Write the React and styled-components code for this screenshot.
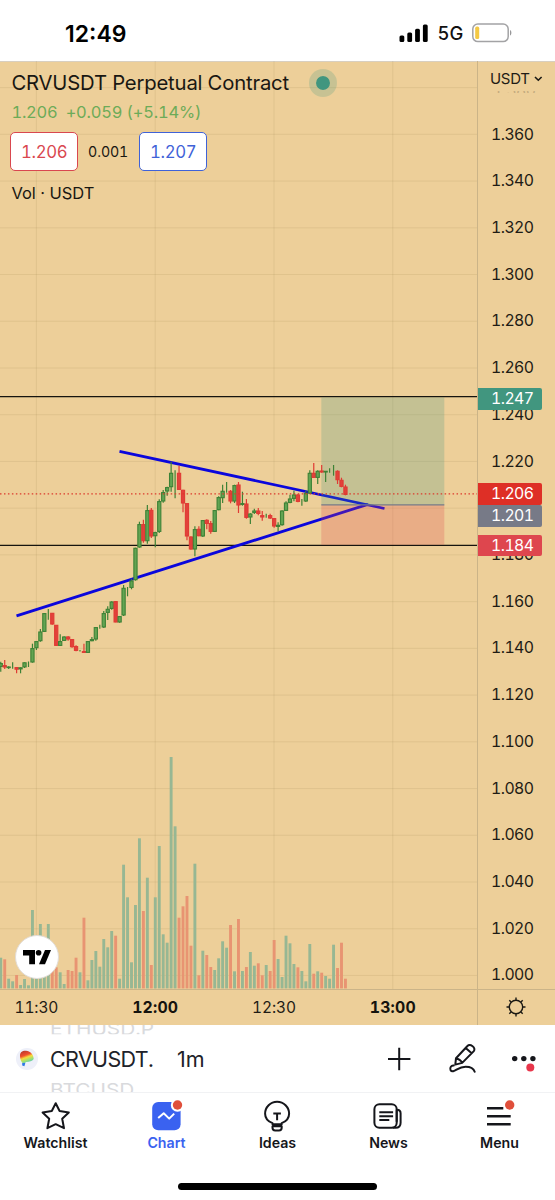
import styled, {createGlobalStyle, css} from 'styled-components';

const SAND = '#edcf99';

// * [volTop, high, bodyTop, bodyBottom, low, up]
const bars = [
  [957.7, 661.7, 663.3, 666.7, 671.7, 1], [959.3, 660, 665.3, 667.3, 669, 0],
  [978.7, 666.3, 666.7, 667.7, 669, 1], [981.3, 662.3, 667, 667.6, 668.7, 1],
  [975, 667.3, 667.3, 669.5, 673.3, 0], [985, 667.3, 667.5, 669.2, 673.3, 1],
  [979, 662.3, 662.5, 667.2, 668, 1], [985.3, 661.5, 662, 662.5, 667, 1],
  [910, 643.7, 648.3, 662.3, 662.7, 1], [956, 641, 641.3, 648, 650, 1],
  [924, 629, 631.7, 641, 641.7, 1], [950, 613, 613.3, 631.7, 632, 1],
  [924, 609, 613, 613.5, 619.7, 1], [970, 613, 613, 624.3, 624.7, 0],
  [967.3, 625, 625, 645.7, 645.7, 0], [972.3, 634.3, 641.3, 645.7, 646, 1],
  [984, 636.3, 636.7, 640.7, 641, 1], [970, 636, 636.7, 639.3, 640.7, 0],
  [971, 639, 639.3, 647, 647.7, 0], [957.7, 645.3, 646.3, 650.7, 651.3, 0],
  [972.3, 650, 650.7, 651.2, 651.5, 1], [917.7, 643.7, 651.3, 652.7, 652.7, 0],
  [980.3, 641, 641.3, 652.7, 653, 1], [960, 637, 639.3, 641, 641.3, 1],
  [951, 627, 627.3, 639.3, 640.7, 1], [966.7, 624.7, 627.3, 628, 628.7, 1],
  [939, 611, 613.3, 627.3, 628, 1], [947.3, 606.3, 609, 612.7, 620, 1],
  [931, 601.3, 601.7, 608.7, 609.7, 1], [935.7, 601.3, 601.3, 622.3, 622.3, 0],
  [978.7, 616, 616.3, 622.3, 622.7, 1], [864.7, 585, 588, 615.3, 616, 1],
  [897.3, 587, 587, 587.5, 596.3, 1], [962.3, 578.7, 580.7, 587.7, 589.3, 1],
  [905, 547.7, 548, 580, 580.7, 1], [838.3, 521.7, 524.3, 547.3, 547.7, 1],
  [911, 519.7, 524.3, 541, 542.7, 0], [877.7, 505, 510.3, 541, 543.7, 1],
  [965, 508, 510, 536.3, 538, 0], [897.3, 531.7, 532.3, 536, 547.3, 1],
  [846, 499.3, 501.3, 531.7, 533, 1], [934.3, 490, 492.3, 501.3, 502.7, 1],
  [942.7, 486.7, 487.3, 491.3, 495.7, 1], [757, 461.7, 473, 487, 491.7, 1],
  [826.3, 470.3, 472.7, 473.2, 498.3, 1], [917.7, 465.7, 473, 489.7, 489.7, 0],
  [906.3, 489.7, 490, 503.3, 512.3, 0], [896, 503.3, 503.3, 536.3, 540.3, 0],
  [945.7, 536.3, 536.7, 549.3, 549.7, 0], [863.7, 526.3, 529.3, 549.3, 556.3, 1],
  [975.3, 526.3, 529, 536, 536.3, 0], [950.7, 520, 520.3, 536.3, 537, 1],
  [955, 519.3, 520, 523.7, 529.3, 0], [967, 521, 523.3, 531.7, 533.7, 0],
  [970, 510.3, 510.3, 531.7, 532, 1], [958.3, 496.3, 497.3, 510, 510.3, 1],
  [941.3, 484.7, 491, 498, 503, 1], [947.7, 482, 491.7, 492.2, 492.7, 1],
  [925, 490, 491, 501.3, 503.3, 0], [971.3, 484.7, 485.3, 501.3, 503, 1],
  [919, 482, 484.7, 505.3, 513, 0], [971, 491.7, 503.3, 504.7, 505.7, 1],
  [967, 499, 503.7, 517.7, 518.7, 0], [952, 513.3, 513.7, 517.3, 524, 1],
  [965.7, 508.7, 510.7, 512.7, 514, 1], [963.3, 508, 510.7, 513.7, 515.3, 0],
  [975.3, 511, 515.3, 517.3, 520.7, 0], [965, 513.7, 515.7, 516.3, 517.7, 1],
  [971, 513.7, 515.3, 518.3, 519, 0], [940, 518, 518.3, 526.3, 527.7, 0],
  [959, 522.3, 525, 526.7, 531.3, 1], [977, 510.3, 510.7, 525, 525.7, 1],
  [935.7, 501.3, 502.7, 510.7, 511, 1], [943.3, 494.7, 498.7, 502.7, 503.3, 1],
  [964, 490.7, 494.7, 498.7, 501.3, 1], [967.3, 494, 494.7, 501.7, 502.3, 0],
  [971, 499, 501.3, 501.8, 505.7, 1], [981.3, 490.7, 493.3, 501.3, 502, 1],
  [944, 470.3, 473, 493.3, 493.7, 1], [973.7, 463, 473, 477.7, 478, 0],
  [971.3, 470.3, 471, 477.7, 484, 1], [972.7, 465, 470.7, 472.3, 472.7, 0],
  [976, 471, 471, 472.3, 482, 1], [978.7, 468.3, 470.7, 471.2, 472.7, 1],
  [944.7, 465, 470.3, 470.8, 475.7, 1], [968, 470.3, 471, 480, 484, 0],
  [942.7, 477.7, 480, 486.7, 487.3, 0], [978.7, 484.7, 486.7, 494.7, 495.3, 0],
];

const barX = (i) => 0.76 + i * 3.962;

const prices = Array.from({length: 19}, (_, i) => (1.36 - i * 0.02).toFixed(3));
const gridRows = Array.from({length: 20}, (_, i) => 87.6 + i * 46.73);
const gridCols = [36.4, 155.2, 274, 392.8];

const tags = [
  {value: '1.247', top: 326.8, color: '#41967f'},
  {value: '1.206', top: 422.2, color: '#de2f26'},
  {value: '1.201', top: 444.2, color: '#777a87'},
  {value: '1.184', top: 473.6, color: '#de464e'},
];

function App() {
  return (
    <>
      <GlobalStyle />
      <Screen>
        <StatusBar />
        <ChartArea>
          <PlotCell>
            <Plot />
            <Legend />
            <TradingViewLogo />
          </PlotCell>
          <PriceAxis />
          <TimeAxis>
            <TimeLabel>11:30</TimeLabel>
            <TimeLabel $bold>12:00</TimeLabel>
            <TimeLabel>12:30</TimeLabel>
            <TimeLabel $bold>13:00</TimeLabel>
          </TimeAxis>
          <AxisCorner>
            <GearIcon />
          </AxisCorner>
        </ChartArea>
        <Toolbar />
        <BottomNav />
        <HomeIndicator />
      </Screen>
    </>
  );
}

function StatusBar() {
  return (
    <StatusContainer>
      <Clock>12:49</Clock>
      <StatusRight>
        <svg width="30" height="19" viewBox="0 0 30 19">
          <rect x="0.5" y="11.5" width="4.8" height="6.5" rx="1.5" />
          <rect x="8.3" y="8.5" width="4.8" height="9.5" rx="1.5" />
          <rect x="16.1" y="4.7" width="4.8" height="13.3" rx="1.5" />
          <rect x="23.9" y="0.5" width="4.8" height="17.5" rx="1.5" />
        </svg>
        <Network>5G</Network>
        <svg width="41" height="20" viewBox="0 0 41 20">
          <rect x="0.8" y="1" width="35.4" height="17.6" rx="5" fill="none" stroke="#a3a3a5" strokeWidth="1.5" />
          <rect x="3.2" y="3.6" width="4" height="12.4" rx="1.6" fill="#f4c944" />
          <path d="M38 7v5.6c1.9-.8 1.9-4.8 0-5.6z" fill="#98989a" />
        </svg>
      </StatusRight>
    </StatusContainer>
  );
}

function Plot() {
  return (
    <PlotSvg viewBox="0 61 477 928">
      <g stroke="#a08755" strokeOpacity="0.17" strokeWidth="1">
        {gridRows.map((y) => (
          <line key={y} x1="0" x2="477" y1={y} y2={y} />
        ))}
        {gridCols.map((x) => (
          <line key={x} x1={x} x2={x} y1="61" y2="989" />
        ))}
      </g>
      {bars.map(([top, , , , , up], i) => (
        <rect
          key={i}
          x={barX(i) - 1.45}
          y={top}
          width="2.9"
          height={988.4 - top}
          fill={up ? '#97b793' : '#e89472'}
        />
      ))}
      <path d="M0 396.7H477M0 545.4H477" stroke="#16140f" strokeWidth="1.3" />
      <path d="M119.5 451.3L384.5 508.5M16.5 615.8L368 504.3" stroke="#0b06dc" strokeWidth="2.8" />
      <rect x="321.3" y="397.4" width="123" height="107.6" fill="#419680" fillOpacity="0.24" />
      <rect x="321.3" y="505" width="123" height="39.8" fill="#de464e" fillOpacity="0.25" />
      <path d="M321.3 504.8H444.3" stroke="#777a87" strokeWidth="1.3" />
      {bars.map(([, high, top, bottom, low, up], i) => (
        <g key={i} fill={up ? '#63a452' : '#e2413a'} stroke={up ? '#3d8236' : '#e03a34'}>
          <path d={`M${barX(i)} ${high}V${low}`} strokeWidth="1.2" />
          {bottom - top > 0.8 && (
            <rect
              x={barX(i) - 1.6}
              y={top + 0.3}
              width="3.2"
              height={Math.max(bottom - top - 0.6, 0.6)}
              strokeWidth="1.1"
            />
          )}
        </g>
      ))}
      <path d="M0 493.9H477" stroke="#dc3a2c" strokeWidth="1.4" strokeDasharray="1.5 2.47" />
    </PlotSvg>
  );
}

function Legend() {
  return (
    <LegendContainer>
      <TitleRow>
        <Title>CRVUSDT Perpetual Contract</Title>
        <MarketStatus />
      </TitleRow>
      <Change>
        <span>1.206</span>
        <span>+0.059 (+5.14%)</span>
      </Change>
      <QuoteRow>
        <Quote $color="#d9474f">1.206</Quote>
        <Spread>0.001</Spread>
        <Quote $color="#3f62d8">1.207</Quote>
      </QuoteRow>
      <Indicator>Vol · USDT</Indicator>
    </LegendContainer>
  );
}

function TradingViewLogo() {
  return (
    <LogoBadge>
      <svg width="28" height="15" viewBox="0 0 28 15">
        <path d="M0 0H12V14.2H6.2V5.6H0z" />
        <circle cx="15.6" cy="2.8" r="2.8" />
        <path d="M22 0H28L22 14.2H16z" />
      </svg>
    </LogoBadge>
  );
}

function PriceAxis() {
  return (
    <PriceContainer>
      <Currency>
        USDT
        <svg width="9" height="6" viewBox="0 0 9 6" fill="none" stroke="#1a1813" strokeWidth="1.6">
          <path d="M1 1l3.3 3.2L7.6 1" />
        </svg>
      </Currency>
      <FadedPrice>1.380</FadedPrice>
      {prices.map((price) => (
        <Price key={price}>{price}</Price>
      ))}
      {tags.map((tag) => (
        <PriceTag key={tag.value} $top={tag.top} $color={tag.color}>
          {tag.value}
        </PriceTag>
      ))}
    </PriceContainer>
  );
}

function GearIcon() {
  return (
    <svg width="20" height="20" viewBox="0 0 20 20" fill="none" stroke="#1c1a14" strokeWidth="1.4">
      <circle cx="10" cy="10" r="6.7" />
      <path d="M10 .5v2.8M10 16.7v2.8M.5 10h2.8M16.7 10h2.8M3.3 3.3l2 2M14.7 14.7l2 2M3.3 16.7l2-2M14.7 5.3l2-2" />
    </svg>
  );
}

function Toolbar() {
  return (
    <ToolbarContainer>
      <Coin>
        <svg width="16" height="17" viewBox="0 0 16 17">
          <defs>
            <linearGradient id="crv" x1="0.2" y1="0" x2="0.6" y2="1">
              <stop offset="0" stopColor="#b93a2c" />
              <stop offset="0.36" stopColor="#f0502c" />
              <stop offset="0.54" stopColor="#f6dc3c" />
              <stop offset="0.74" stopColor="#a4e070" />
              <stop offset="1" stopColor="#46c6c4" />
            </linearGradient>
          </defs>
          <path d="M1 6C.8 2.5 3 .8 6.5 .8c4.5-.3 8 3.5 8.2 8.2-1.600 2.300-4.200 2.800-7.400 2.900L5 13.500C2.500 13 1.200 10 1 6z" fill="url(#crv)" />
          <path d="M3.200 13c1 .1 2.200.2 3.100 0l-.9 3.200-2.200-.8z" fill="#2f78e6" />
        </svg>
      </Coin>
      <SymbolWheel>
        <GhostSymbol $edge="top">ETHUSD.P</GhostSymbol>
        <Symbol>CRVUSDT.</Symbol>
        <GhostSymbol $edge="bottom">BTCUSD</GhostSymbol>
      </SymbolWheel>
      <Interval>1m</Interval>
      <Tools>
        <svg width="24" height="24" viewBox="0 0 24 24" stroke="#15161b" strokeWidth="2">
          <path d="M12.2 .8v22.4M1 12h22.4" />
        </svg>
        <svg
          width="28"
          height="30"
          viewBox="0 0 28 30"
          fill="none"
          stroke="#15161b"
          strokeWidth="2"
          strokeLinejoin="round"
          strokeLinecap="round"
        >
          <path d="M7 14.2L18.2 2.2C21.2-.8 27.4 3.7 24.8 7.1L13.2 18.9 6.3 20.6zM7 14.4c2.5.3 4.8 1.8 6.2 4.4M16.7 4l5.700 5" />
          <path d="M4.8 21.500C2.200 21 .6 23.800 1.500 25.900 2.800 28.300 5.500 26.900 7.500 25.700 11 23.600 13 22.700 16.600 22.700c4.200 0 7.900 1.200 9.100 5" />
        </svg>
        <svg width="28" height="18" viewBox="0 0 28 18" fill="#15161b">
          <circle cx="4.7" cy="8.6" r="2.7" />
          <circle cx="13.8" cy="8.6" r="2.7" />
          <circle cx="22.9" cy="8.6" r="2.7" />
          <circle cx="20.3" cy="17.5" r="4" fill="#e8364b" />
        </svg>
      </Tools>
    </ToolbarContainer>
  );
}

function BottomNav() {
  return (
    <NavContainer>
      <NavItem>
        <NavIcon viewBox="0 0 32 32">
          <path d="M16.7 3.2L20.6 11l9.200 1.500-6.600 6.300 1.800 9.400-8.300-4-8.300 4 1.800-9.400L3.600 12.500 12.800 11z" />
        </NavIcon>
        Watchlist
      </NavItem>
      <NavItem $active>
        <NavIcon viewBox="0 0 32 32">
          <rect x="2.2" y="2" width="28.4" height="28.2" rx="6" fill="#3a62f0" stroke="none" />
          <path d="M8.2 18l5.500-4.700 5.500 5.300 5-5" stroke="#fff" strokeWidth="2" />
          <circle cx="27.5" cy="5" r="6.700" fill="#fff" stroke="none" />
          <circle cx="27.5" cy="5" r="4.700" fill="#e04f3b" stroke="none" />
        </NavIcon>
        Chart
      </NavItem>
      <NavItem>
        <NavIcon viewBox="0 0 32 32">
          <path d="M11.500 24.300v-1.100C6.900 21.300 4.100 18 4.100 13.700a12 12 0 0 1 24 0c0 4.300-2.800 7.600-7.400 9.500v1.100zM11.500 26.300h9.200v1.500q0 2.700-2.700 2.700h-3.800q-2.700 0-2.700-2.700zM12.300 13.600h7.600M16.100 13.600v6.600" />
        </NavIcon>
        Ideas
      </NavItem>
      <NavItem>
        <NavIcon viewBox="0 0 32 32">
          <rect x="2.400" y="4.300" width="22.300" height="23.400" rx="5" />
          <path d="M25 9.700q3.600 0 3.600 3.600v9.400q0 5-5 5h-3M24.700 9.500v12.200M7.300 12.300h13.800M7.300 16.200h13.800M7.300 20.100h10" />
        </NavIcon>
        News
      </NavItem>
      <NavItem>
        <NavIcon viewBox="0 0 32 32">
          <path d="M4 8.200h16.300M4 16.200h23.700M4 24.200h23.700" strokeWidth="2.400" />
          <circle cx="26.700" cy="5" r="4.700" fill="#e04f3b" stroke="none" />
        </NavIcon>
        Menu
      </NavItem>
    </NavContainer>
  );
}

const GlobalStyle = createGlobalStyle`
  body {
    margin: 0;
    background: #fff;
    font-family: Inter, 'Liberation Sans', sans-serif;
    font-variant-numeric: tabular-nums;
  }
  * {
    box-sizing: border-box;
  }
  svg {
    display: block;
    flex: none;
    overflow: visible;
  }
`;
const Screen = styled.div`
  width: 555px;
  height: 1200px;
  display: flex;
  flex-direction: column;
  overflow: hidden;
  background: #fff;
  color: #15161b;
`;
const StatusContainer = styled.header`
  height: 61px;
  flex: none;
  display: flex;
  align-items: center;
  justify-content: space-between;
  padding: 5px 42px 0 65px;
`;
const Clock = styled.div`
  padding-top: 1px;
  font-size: 23px;
  font-weight: 600;
  color: #000;
  font-variant-numeric: normal;
`;
const StatusRight = styled.div`
  display: flex;
  align-items: center;
`;
const Network = styled.span`
  width: 43.5px;
  padding-left: 9px;
  font-size: 18.5px;
  font-weight: 500;
  color: #111;
`;
const ChartArea = styled.main`
  height: 964px;
  flex: none;
  display: grid;
  grid-template-columns: 477px 78px;
  grid-template-rows: 928px 36px;
  background: ${SAND};
  box-shadow: inset 0 1px 0 #d8cfc0;
`;
const PlotCell = styled.div`
  position: relative;
`;
const PlotSvg = styled.svg`
  width: 477px;
  height: 928px;
`;
const LegendContainer = styled.div`
  position: absolute;
  top: 8px;
  left: 10.4px;
  color: #191712;
`;
const TitleRow = styled.div`
  display: flex;
  align-items: center;
  height: 28px;
  gap: 20px;
`;
const Title = styled.h1`
  width: 279px;
  margin: 0;
  padding-left: 1px;
  font-size: 20.3px;
  font-weight: 400;
  letter-spacing: -0.18px;
  line-height: 26px;
  white-space: nowrap;
`;
const MarketStatus = styled.span`
  width: 28px;
  height: 28px;
  border: 7.5px solid rgba(65, 150, 127, 0.22);
  border-radius: 50%;
  background: #41967f;
  background-clip: padding-box;
`;
const Change = styled.div`
  display: flex;
  gap: 8px;
  height: 29px;
  padding: 5px 0 0 1px;
  font-size: 16.5px;
  line-height: 20px;
  letter-spacing: -0.2px;
  color: #6dab58;
`;
const QuoteRow = styled.div`
  display: flex;
  align-items: center;
  margin-top: 6px;
`;
const Quote = styled.button`
  width: 67.5px;
  height: 39px;
  padding: 0;
  border: 1.5px solid ${({$color}) => $color};
  border-radius: 5px;
  background: #fff;
  color: ${({$color}) => $color};
  font: inherit;
  font-size: 16.8px;
  font-variant-numeric: tabular-nums;
  letter-spacing: -0.35px;
`;
const Spread = styled.span`
  width: 61.5px;
  padding-right: 1px;
  font-size: 14.2px;
  letter-spacing: -0.1px;
  text-align: center;
`;
const Indicator = styled.div`
  padding: 12px 0 0 1px;
  font-size: 16.5px;
  line-height: 20px;
`;
const LogoBadge = styled.div`
  position: absolute;
  left: 15px;
  bottom: 10px;
  width: 44px;
  height: 44px;
  display: grid;
  place-items: center;
  border: 1px solid #e2ddd8;
  border-radius: 50%;
  background: #fff;
`;
const PriceContainer = styled.div`
  position: relative;
  height: 928px;
  padding-left: 13px;
  overflow: hidden;
  border-left: 1px solid #cbb488;
  font-size: 15.8px;
  letter-spacing: -0.55px;
  color: #1f1c15;
`;
const Currency = styled.div`
  display: flex;
  align-items: center;
  gap: 4px;
  height: 30px;
  margin-left: -1px;
  padding-top: 5px;
  font-size: 15px;
  letter-spacing: -0.3px;
`;
const FadedPrice = styled.div`
  height: 2px;
  margin-bottom: 18.5px;
  overflow: hidden;
  line-height: 0;
  padding-left: 2px;
  opacity: 0.2;
`;
const Price = styled.div`
  height: 46.73px;
  line-height: 46.73px;
`;
const PriceTag = styled.div`
  position: absolute;
  top: ${({$top}) => $top}px;
  left: -1px;
  width: 65px;
  height: 21.8px;
  padding-left: 14px;
  border-radius: 0 2px 2px 0;
  line-height: 22.6px;
  background: ${({$color}) => $color};
  color: #fff;
`;
const TimeAxis = styled.div`
  display: grid;
  grid-template-columns: repeat(4, 118.8px);
  align-items: center;
  margin-left: -23px;
  border-top: 1px solid #cbb488;
`;
const TimeLabel = styled.span`
  text-align: center;
  font-size: 15.5px;
  letter-spacing: -0.1px;
  color: #1f1c15;
  ${({$bold}) =>
    $bold &&
    css`
      font-size: 15.8px;
      font-weight: 700;
      letter-spacing: 0.2px;
      color: #15130e;
    `}
`;
const AxisCorner = styled.div`
  display: grid;
  place-items: center;
  padding: 0 2px 2px 0;
  border-top: 1px solid #cbb488;
  border-left: 1px solid #cbb488;
`;
const ToolbarContainer = styled.div`
  height: 68px;
  flex: none;
  display: flex;
  align-items: center;
  padding: 0 17px 0 16px;
  border-bottom: 1px solid #f1f2f4;
`;
const Coin = styled.span`
  width: 22px;
  height: 22px;
  display: grid;
  place-items: center;
  border-radius: 50%;
  background: #eef0f9;
`;
const SymbolWheel = styled.div`
  width: 139px;
  height: 67px;
  display: grid;
  grid-template-rows: 11px 45px 11px;
  padding-left: 12px;
  overflow: hidden;
`;
const Symbol = styled.span`
  font-size: 21.5px;
  line-height: 46px;
  letter-spacing: -0.65px;
  white-space: nowrap;
  color: #202229;
`;
const GhostSymbol = styled.span`
  height: 11px;
  display: flex;
  align-items: ${({$edge}) => ($edge === 'top' ? 'flex-end' : 'flex-start')};
  overflow: hidden;
  font-size: 20.8px;
  line-height: ${({$edge}) => ($edge === 'top' ? '13px' : '17px')};
  color: #d9dadd;
  transform: scaleY(0.85);
  transform-origin: ${({$edge}) => $edge};
`;
const Interval = styled.span`
  font-size: 21.5px;
  font-variant-numeric: normal;
  color: #202229;
`;
const Tools = styled.div`
  display: grid;
  grid-template-columns: 62px 61px 28px;
  align-items: center;
  margin-left: auto;
`;
const NavContainer = styled.nav`
  height: 74px;
  flex: none;
  display: grid;
  grid-template-columns: repeat(5, 111px);
`;
const NavItem = styled.a`
  display: flex;
  flex-direction: column;
  align-items: center;
  gap: 2px;
  padding-top: 7px;
  font-size: 14.2px;
  font-weight: 600;
  line-height: 17px;
  color: ${({$active}) => ($active ? '#3a62f0' : '#15161b')};
`;
const NavIcon = styled.svg`
  width: 32px;
  height: 32px;
  margin-right: 1.4px;
  fill: none;
  stroke: #15161b;
  stroke-width: 2;
  stroke-linejoin: round;
`;
const HomeIndicator = styled.div`
  width: 199px;
  height: 6.5px;
  flex: none;
  align-self: center;
  margin-top: 16px;
  border-radius: 4px;
  background: #000;
`;

export default App;
